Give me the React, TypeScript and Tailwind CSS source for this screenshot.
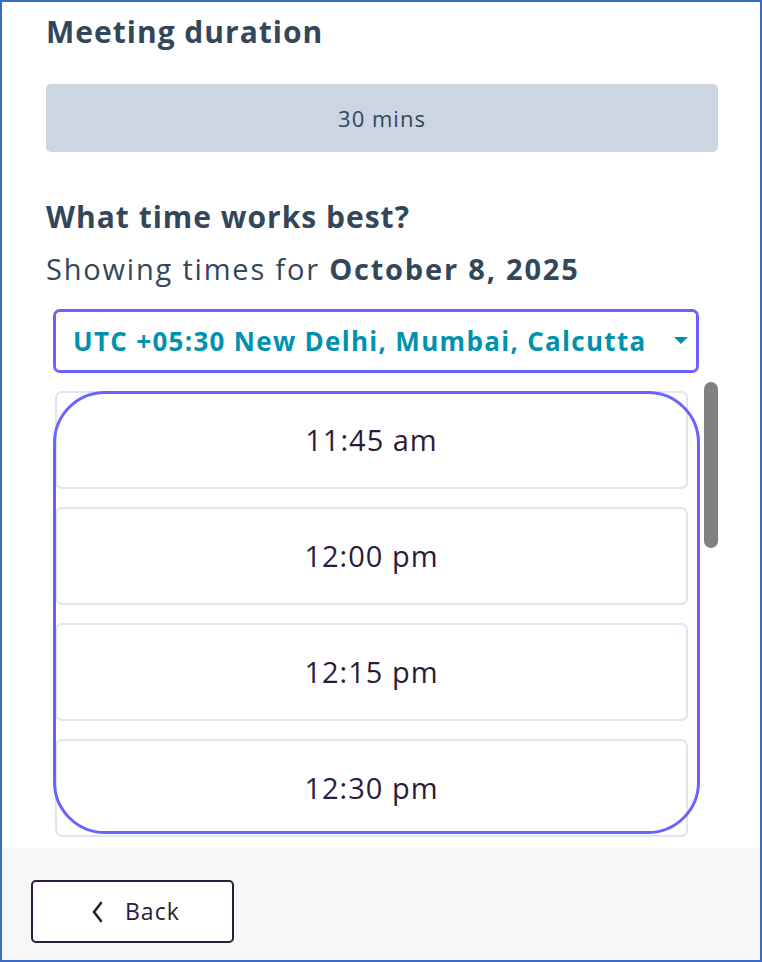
import React from "react";

const slots = ["11:45 am", "12:00 pm", "12:15 pm", "12:30 pm"];

export default function App() {
  return (
    <div
      className="w-[762px] h-[962px] border-2 border-[#3a6bc6] bg-white flex flex-col overflow-hidden"
      style={{ fontFamily: "'Open Sans', 'Noto Sans', sans-serif" }}
    >
      <div className="flex-1 flex flex-col pl-[44px] pr-[42px]">
        <h1 className="mt-[10px] text-[30px] leading-[40px] font-bold tracking-[1px] text-[#33475b]">
          Meeting duration
        </h1>
        <div className="mt-[32px] h-[68px] rounded-[5px] bg-[#cbd6e2] flex items-center justify-center text-[22px] tracking-[1px] text-[#33475b]">
          30 mins
        </div>
        <h2 className="mt-[46px] text-[30px] leading-[38px] font-bold tracking-[1px] text-[#33475b]">
          What time works best?
        </h2>
        <p className="mt-[14px] text-[29px] leading-[38px] tracking-[1.8px] text-[#33475b]">
          Showing times for <span className="font-bold">October 8, 2025</span>
        </p>
        <div className="ml-[7px] mr-[19px] mt-[21px] h-[64px] rounded-[7px] border-[3px] border-[#6c63ff] flex items-center justify-between pl-[17px] pr-[6px]">
          <span className="text-[26px] font-bold tracking-[1.3px] text-[#0091ae]">
            UTC +05:30 New Delhi, Mumbai, Calcutta
          </span>
          <svg width="14" height="8" viewBox="0 0 14 8" className="mr-[2px]">
            <path d="M0 0 L14 0 L7 7 Z" fill="#0091ae" />
          </svg>
        </div>
        <div className="relative ml-[7px] mt-[9px] h-[456px] overflow-hidden">
          <div className="flex flex-col gap-[18px] pt-[9px] pl-[2px] w-[635px]">
            {slots.map((s) => (
              <div
                key={s}
                className="h-[98px] shrink-0 rounded-[7px] border-2 border-[#e1e5ef] bg-white flex items-center justify-center text-[29px] tracking-[1px] text-[#2d1b3a]"
              >
                {s}
              </div>
            ))}
          </div>
          <div className="absolute left-0 top-[9px] w-[647px] h-[443px] rounded-[52px] border-[3px] border-[#6c63ff]" />
          <div className="absolute right-0 top-0 w-[14px] h-[166px] rounded-full bg-[#808080]" />
        </div>
      </div>
      <div className="h-[112px] bg-[#f5f7f9] pl-[29px] pt-[32px] mt-[8px]">
        <button className="w-[203px] h-[63px] rounded-[5px] border-2 border-[#2d1b3a] bg-white flex items-center pl-[58px] gap-[21px] text-[23px] tracking-[1px] text-[#2d1b3a]">
          <svg width="13" height="22" viewBox="0 0 13 22">
            <path d="M10 2 L3 11 L10 20" fill="none" stroke="#2d1b3a" strokeWidth="2.6" strokeLinecap="round" strokeLinejoin="round" />
          </svg>
          <span>Back</span>
        </button>
      </div>
    </div>
  );
}
